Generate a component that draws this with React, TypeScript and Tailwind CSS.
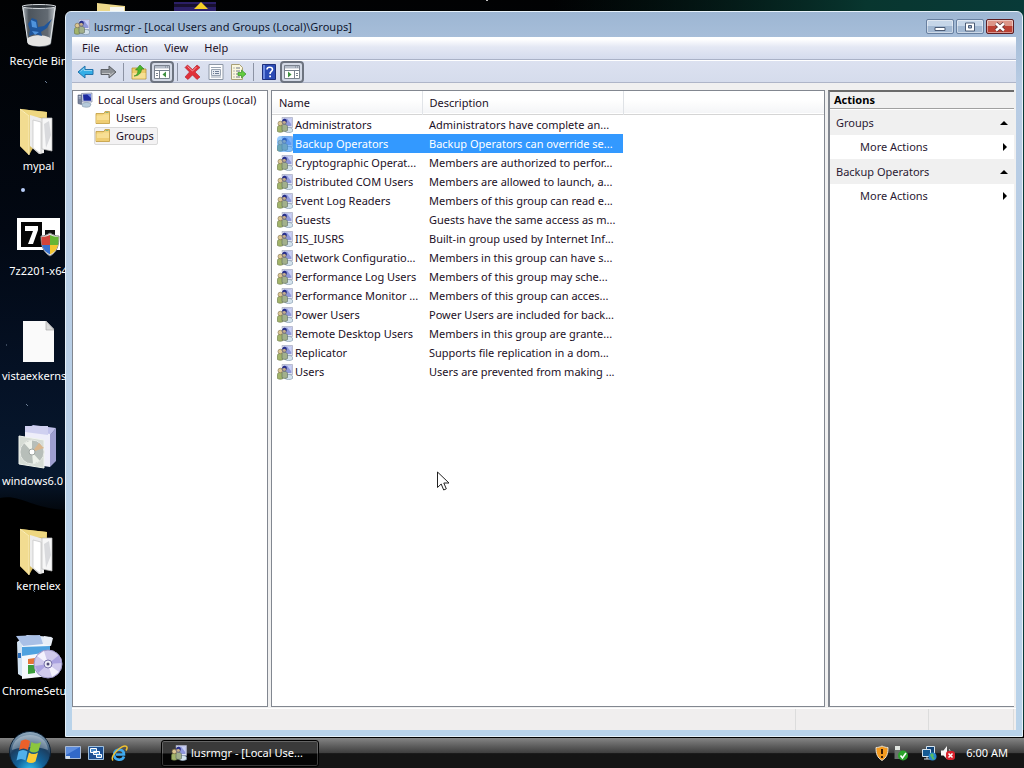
import clsx from 'clsx'
import type { ReactNode } from 'react'

const groups = [
	{ name: 'Administrators', description: 'Administrators have complete an...' },
	{ name: 'Backup Operators', description: 'Backup Operators can override se...' },
	{ name: 'Cryptographic Operat...', description: 'Members are authorized to perfor...' },
	{ name: 'Distributed COM Users', description: 'Members are allowed to launch, a...' },
	{ name: 'Event Log Readers', description: 'Members of this group can read e...' },
	{ name: 'Guests', description: 'Guests have the same access as m...' },
	{ name: 'IIS_IUSRS', description: 'Built-in group used by Internet Inf...' },
	{ name: 'Network Configuratio...', description: 'Members in this group can have s...' },
	{ name: 'Performance Log Users', description: 'Members of this group may sche...' },
	{ name: 'Performance Monitor ...', description: 'Members of this group can acces...' },
	{ name: 'Power Users', description: 'Power Users are included for back...' },
	{ name: 'Remote Desktop Users', description: 'Members in this group are grante...' },
	{ name: 'Replicator', description: 'Supports file replication in a dom...' },
	{ name: 'Users', description: 'Users are prevented from making ...' },
]

const UsersIcon = () => (
	<svg width="16" height="16" viewBox="0 0 16 16" className="shrink-0">
		<path d="M5 .500h10.500v10H6z" fill="#dfe2f0" stroke="#a4a8c0" strokeWidth=".7" />
		<path d="M6.500 1.500h8v7.500h-7z" fill="#8f98da" />
		<path d="M10 1.500h4.500v6z" fill="#c9d0f5" />
		<path d="M8 12c1-2 6.500-2 7.500 0v2.500c-2 1.500-5.500 1.500-7.500 0z" fill="#d3e2ec" stroke="#7b92a8" strokeWidth=".6" />
		<path d="M.5 10.500c0-3 5.500-3 5.500 0V14.500c-1.500 1-4 1-5.500 0z" fill="#a3b46a" stroke="#64753f" strokeWidth=".6" />
		<path d="M5 9.500c0-3 5-3 5.500 0v4c-1.500 1.200-4 1.200-5.500 0z" fill="#a2b08c" stroke="#5a6a62" strokeWidth=".6" />
		<circle cx="3.300" cy="6.500" r="2.300" fill="#dcc792" stroke="#7c6c46" strokeWidth=".6" />
		<circle cx="7.300" cy="5" r="2.200" fill="#c4ad8b" stroke="#4e4f78" strokeWidth=".6" />
		<path d="M5.300 4.500C5 1 9.500 1 9.800 4L9.200 5.500 8 3.700z" fill="#252d8a" />
	</svg>
)

const ComputerIcon = () => (
	<svg width="16" height="16" viewBox="0 0 16 16" className="shrink-0">
		<path d="M4.500 1.500 15 1v9H5z" fill="#cfd5e6" stroke="#8087a5" strokeWidth=".7" />
		<path d="M6 2.500 14 2v6.800H6.500z" fill="#1c2aa0" />
		<path d="M10 2.300 14 2v4z" fill="#7187e0" />
		<path d="M1 3h3.500v9.500L1 11.500z" fill="#78839b" stroke="#4e5a78" strokeWidth=".6" />
		<path d="M1.700 4.500h2M1.700 6h2" stroke="#d6deee" strokeWidth=".7" />
		<path d="M5 12c2-2 7-2 9 0l-1 2.500c-2 1-5 1-7.500 0z" fill="#b5cadb" stroke="#7f93a7" strokeWidth=".6" />
	</svg>
)

const FolderIcon = () => (
	<svg width="16" height="16" viewBox="0 0 16 16" className="shrink-0">
		<path d="M1 3.500h8l1-2h4.500v12H1z" fill="#f1d27a" stroke="#c09a3c" strokeWidth=".8" />
		<path d="M10.500 2.500h3" stroke="#8db37a" />
		<path d="M1.500 5.500h6l1-1h5.500V13H1.500z" fill="#f8df94" />
		<path d="M1.500 10h12.500v3H1.500z" fill="#efcd73" />
	</svg>
)

const Arrow = ({ className, fill, stroke }: { className?: string; fill: string; stroke: string }) => (
	<svg width="17" height="16" viewBox="0 0 17 16" className={className}>
		<path d="M1 8l7-6v3.500h8v5H8V14z" fill={fill} stroke={stroke} strokeLinejoin="round" />
		<path d="M3.500 7.500 7 4.500v2h8" fill="none" stroke="#fff" strokeOpacity=".45" />
	</svg>
)

const UpFolderIcon = () => (
	<svg width="16" height="16" viewBox="0 0 16 16">
		<path d="M1 4h5l1 1h8v10H1z" fill="#edcb68" stroke="#b48f37" strokeWidth=".8" />
		<path d="M1.500 9h13v5.500h-13z" fill="#f7df92" />
		<path d="M3 12c3-.5 4-3 4-6H4.500L9 1l4 4h-2.500c0 4-3 7-7.500 7z" fill="#4cb62c" stroke="#2f8420" strokeWidth=".6" />
	</svg>
)

const PaneIcon = ({ flipped }: { flipped?: boolean }) => (
	<svg width="16" height="14" viewBox="0 0 16 14">
		<path d="M.5.500h15v13H.5z" fill="#fff" stroke="#7a828e" />
		<path d="M1 1h14v2.500H1z" fill="#b5bdc9" />
		<path d="M11 2h1M13 2h1M1 5.500h14" stroke="#76808e" />
		<path d={flipped ? 'M10.500 6v7M12 8.500h2M12 10.500h2' : 'M5.500 6v7M2 8.500h2M2 10.500h2'} stroke="#7a828e" />
		<path d={flipped ? 'M4 6.500v6l3.500-3z' : 'M12 6.500v6l-3.500-3z'} fill="#3f9140" />
	</svg>
)

const DeleteIcon = () => (
	<svg width="17" height="16" viewBox="0 0 17 16">
		<path
			d="M3.500 1 8.500 5.500 13 1l3 2.500L11 8l5 5-3 2.500L8.500 11 4 15.500 1 13l4.500-5L1 3.500z"
			fill="#e0303a"
			stroke="#b01f2a"
			strokeWidth=".6"
		/>
		<path d="M3.500 2.500 8.500 7l4-4" fill="none" stroke="#f59aa0" />
	</svg>
)

const PropertiesIcon = () => (
	<svg width="16" height="16" viewBox="0 0 16 16">
		<path d="M1 .500h14v15H1z" fill="#fdfdfe" stroke="#8d97a6" />
		<path d="M3 3.500h10M3 13h10" stroke="#9aa4b2" />
		<path d="M3.500 5.500h9v6h-9z" fill="#e6eaf0" stroke="#9aa4b2" />
		<path d="M5 7.500h1M7 7.500h4M5 9.500h1M7 9.500h4" stroke="#6e7c94" />
	</svg>
)

const ExportIcon = () => (
	<svg width="17" height="16" viewBox="0 0 17 16">
		<path d="M1.500.500h8l3 3v12h-11z" fill="#fbf7dd" stroke="#a89f77" />
		<path d="M3.500 4h1M6 4h4M3.500 7h1M6 7h4M3.500 10h1M6 10h2M3.500 13h1M6 13h4" stroke="#6c7588" />
		<path d="M8 8.500h3.500V6l4.500 4-4.500 4v-2.500H8z" fill="#62cc3e" stroke="#36912a" strokeWidth=".7" />
	</svg>
)

const HelpIcon = () => (
	<svg width="14" height="16" viewBox="0 0 14 16">
		<path d="M.5.500h13v15H.5z" fill="#2b4bb5" stroke="#1d2f7d" />
		<path d="M1 1h2v14H1z" fill="#6d8be0" />
		<path d="M5 5.500C5 2.500 10.500 2.500 10.500 5.500c0 2-2.500 2-2.500 4.500" fill="none" stroke="#fff" strokeWidth="1.600" />
		<path d="M7.200 11.500H9v1.800H7.200z" fill="#fff" />
	</svg>
)

const BinIcon = () => (
	<svg width="48" height="48" viewBox="0 0 48 48">
		<defs>
			<linearGradient id="glass" x1="0" x2="1">
				<stop offset="0" stopColor="#b9c0c6" />
				<stop offset=".2" stopColor="#4c545c" />
				<stop offset=".75" stopColor="#626a72" />
				<stop offset="1" stopColor="#c3c9cd" />
			</linearGradient>
		</defs>
		<path d="M7 3h34l-5 38c-4 4-18 4-23 0z" fill="url(#glass)" />
		<path d="M12 36c4-5 20-5 24 0l-1 5c-5 3-17 3-22 0z" fill="#e4e4e2" />
		<path d="m13 21 4-6 5 2 1 7 6-1 8-7-5 9-6 4 1 4-7-2-6 2 1-6z" fill="#1f559a" />
		<path d="m16 17 5 2 1 6-5-1zM17 28l7 1-4 3z" fill="#4f93dc" />
		<path d="M8 5l5 35M40 5l-5 35" stroke="#e2e6e9" />
		<ellipse cx="24" cy="3.500" rx="17" ry="2" fill="#30363c" stroke="#d6dade" />
	</svg>
)

const DocsFolderIcon = () => (
	<svg width="48" height="48" viewBox="0 0 48 48">
		<path d="M5 1l27 3v12L14 47 5 38z" fill="#d7bb5e" />
		<path d="M5 1l9 7v39l-9-9z" fill="#f2dc91" />
		<path d="M5 1l27 3-1 6-17-2z" fill="#eed780" />
		<path d="M15 7l14 4v34l-5 1-9-8z" fill="#ededed" />
		<path d="M18 12l8 2v32l-8-6z" fill="#fff" stroke="#c2c2c2" strokeWidth=".7" />
		<path d="M27 10h10v33l-10-2z" fill="#f7f7f7" stroke="#bcbcbc" strokeWidth=".7" />
		<path d="M29 16l5-3 2 14-5 13z" fill="#d9dadd" />
		<path d="M5 1l9 7v39" fill="none" stroke="#faedb8" />
	</svg>
)

const SevenZipIcon = () => (
	<svg width="48" height="48" viewBox="0 0 48 48">
		<path d="M2 5h43v32H2z" fill="#fff" />
		<path d="M6 9h21v25H6z" fill="#050505" />
		<path d="M10 13h13v4l-5 14h-5l5-13h-8z" fill="#fff" />
		<path d="M30 17h10v5H30z" fill="#111" />
		<path d="M35 20c3 2 6 3 9 3 0 10-2 16-9 20-7-4-9-10-9-20 3 0 6-1 9-3z" fill="#e8e8e8" stroke="#8a8a8a" />
		<path d="M35 22v10h-8c-.5-2-.5-5-.5-8 3 0 6-1 8.500-2z" fill="#d2443a" />
		<path d="M35 22c2.500 1 5.500 2 8.500 2 0 3 0 6-.5 8h-8z" fill="#65b535" />
		<path d="M27 32h8v9.500c-4-2-7-5-8-9.500z" fill="#3871cd" />
		<path d="M35 32h8c-1 4.500-4 7.500-8 9.500z" fill="#f3c52f" />
	</svg>
)

const PageIcon = () => (
	<svg width="48" height="48" viewBox="0 0 48 48">
		<path d="M8 3h23l8 8v33H8z" fill="#fafafa" />
		<path d="M31 3l8 9h-8z" fill="#dcdcdc" stroke="#a9a9a9" strokeWidth=".7" />
	</svg>
)

const InstallerIcon = () => (
	<svg width="48" height="48" viewBox="0 0 48 48">
		<path d="M10 7l8-5 23 3-7 9z" fill="#bfc0ea" />
		<path d="M10 7l25 4v33l-25-4z" fill="#eeeefa" />
		<path d="M35 12l6-7v33l-6 6z" fill="#9d9ed0" />
		<path d="M10 3h23v9l-23-3z" fill="#cfd0f0" />
		<path d="M4 13l25 4v28L4 41z" fill="#d6dcd5" stroke="#f1f5ef" />
		<circle cx="17" cy="29" r="12" fill="#b7beb9" stroke="#e6e9e5" />
		<path d="M17 29 9 20l8-3zM17 29l8 9-7 3z" fill="#edf1ea" />
		<path d="M17 29l7-9 5 5z" fill="#d9b58c" />
		<circle cx="17" cy="29" r="3" fill="#fff" stroke="#9ea5a0" />
	</svg>
)

const SetupIcon = () => (
	<svg width="48" height="48" viewBox="0 0 48 48">
		<path d="M2 9l10-7 25 2-6 9z" fill="#dfe9f7" />
		<path d="M2 9h6v35l-5-3z" fill="#d3e3f2" />
		<path d="M7 11l28-1v33L7 46z" fill="#f4f8fc" />
		<path d="M7 14l28-1v6L7 23z" fill="#4fa2df" />
		<path d="M1 3l24-1 3 9-20 2z" fill="#a9c0e6" />
		<path d="M28 11l1-8 9 2-2 8z" fill="#e9eef6" />
		<path d="M13 26l7-1v6h-7z" fill="#e57638" />
		<path d="M13 32h7v8l-7 1z" fill="#3b9d3c" />
		<path d="M3 20h3v5H3z" fill="#2a6cba" />
		<circle cx="33" cy="31" r="14" fill="#cfc9ec" stroke="#9d97c8" />
		<path d="M33 31 22 23l7-5zM33 31l11 8-7 5z" fill="#f4f2fd" />
		<path d="M33 31 44 22l2 8zM33 31l-10 9-3-7z" fill="#aaa2e0" />
		<circle cx="33" cy="31" r="4" fill="#ececf6" stroke="#7771a9" />
		<circle cx="33" cy="31" r="1.500" fill="#4d4875" />
	</svg>
)

const StartOrb = () => (
	<svg width="44" height="44" viewBox="0 0 44 44">
		<defs>
			<radialGradient id="orb" cx=".5" cy=".95" r=".95">
				<stop offset="0" stopColor="#35c4f3" />
				<stop offset=".35" stopColor="#12639b" />
				<stop offset=".65" stopColor="#1b3f62" />
				<stop offset="1" stopColor="#9bb3c6" />
			</radialGradient>
		</defs>
		<circle cx="22" cy="22" r="20.500" fill="url(#orb)" stroke="#0d2237" />
		<path d="M4 20C5 0 39 0 40 20c-10-4-26-4-36 0z" fill="#fff" opacity=".3" />
		<path d="M13 11c3-2 6-2 9 0l-2 9c-3-2-6-2-9 0z" fill="#e9602b" />
		<path d="M23.500 12c3 2 6 2 9.500 0l-2.500 9c-3 2-6 2-9 0z" fill="#8cc63c" />
		<path d="M10.500 21.500c3-2 6-2 9 0l-2 9c-3-2-6-2-9 0z" fill="#50b0ea" />
		<path d="M21 22.500c3 2 6 2 9 0l-2.500 9c-3 2-6 2-9 0z" fill="#fbcb35" />
	</svg>
)

const desktopIcons = [
	{ label: 'Recycle Bin', icon: <BinIcon /> },
	{ label: 'mypal', icon: <DocsFolderIcon /> },
	{ label: '7z2201-x64', icon: <SevenZipIcon /> },
	{ label: 'vistaexkerns', icon: <PageIcon />, long: true },
	{ label: 'windows6.0', icon: <InstallerIcon />, long: true },
	{ label: 'kernelex', icon: <DocsFolderIcon /> },
	{ label: 'ChromeSetup', icon: <SetupIcon />, long: true },
]

const Wallpaper = () => (
	<svg className="absolute inset-0 h-full w-full" viewBox="0 0 1024 768" preserveAspectRatio="none">
		<defs>
			<linearGradient id="sky" x1="0" x2="0" y1="0" y2="1">
				<stop offset="0" stopColor="#010203" />
				<stop offset=".3" stopColor="#020813" />
				<stop offset=".5" stopColor="#051226" />
				<stop offset=".62" stopColor="#07182e" />
				<stop offset=".67" stopColor="#020509" />
				<stop offset=".7" stopColor="#000" />
			</linearGradient>
			<linearGradient id="aurora" x1="0" x2="1">
				<stop offset=".1" stopColor="#04221d" stopOpacity="0" />
				<stop offset=".7" stopColor="#08362f" />
				<stop offset="1" stopColor="#083a38" />
			</linearGradient>
		</defs>
		<path d="M0 0h1024v768H0z" fill="url(#sky)" />
		<path d="M500 0h524v730H500z" fill="url(#aurora)" />
		<path d="M0 498c20-4 30 10 66 12v258H0z" fill="#000" />
		<circle cx="23" cy="190" r="2" fill="#b7cdf8" />
		<circle cx="487" cy="0" r="1" fill="#fff" />
		<path d="M45 81l2 2M26 404l2 2M33 590l2 2M6 345h1" stroke="#6d7f96" />
		<path d="M97 3l28 3v10H97z" fill="#ecd88b" />
		<path d="M110 7h14v6h-14z" fill="#f7f7ef" />
		<path d="M174 2h42v12h-42z" fill="#2b1f66" />
		<path d="M174 4h42v3h-42z" fill="#17102f" />
		<path d="M194 9l7-7 7 7z" fill="#f4cf27" />
	</svg>
)

const CaptionButton = ({ label, danger, children }: { label: string; danger?: boolean; children: ReactNode }) => (
	<button
		aria-label={label}
		className={clsx(
			'flex h-[15px] w-7 items-center justify-center rounded-[2px] border shadow-[inset_0_0_0_1px_rgba(255,255,255,0.45)]',
			danger
				? 'border-[#5c1e22] bg-linear-to-b from-[#dc9587] from-45% to-[#bb4133] to-50%'
				: 'border-[#6880a0] bg-linear-to-b from-[#c6d6e8] from-45% to-[#a2b8d2] to-50%',
		)}
	>
		{children}
	</button>
)

const ToolButton = ({ label, pressed, children }: { label: string; pressed?: boolean; children: ReactNode }) => (
	<button
		aria-label={label}
		aria-pressed={pressed}
		className={clsx(
			'flex h-[22px] items-center justify-center',
			pressed
				? 'w-6 rounded-[4px] border-2 border-[#6d7480] bg-[#d3d9e5]'
				: 'w-[23px]',
		)}
	>
		{children}
	</button>
)

const ToolSeparator = () => <div className="mx-[3px] h-[18px] w-px bg-[#8c93a4]" />

const TitleBar = () => (
	<header className="flex h-[25px] items-center justify-between pr-0.5 pl-0.5">
		<h1 className="flex items-center gap-1 pt-1 text-[#101830]">
			<UsersIcon />
			lusrmgr - [Local Users and Groups (Local)\Groups]
		</h1>
		<div className="flex gap-0.5 pt-1">
			<CaptionButton label="Minimize">
				<svg width="12" height="10" viewBox="0 0 12 10">
					<path d="M1 5.500h10v3H1z" fill="#fff" stroke="#4d5d76" />
				</svg>
			</CaptionButton>
			<CaptionButton label="Restore">
				<svg width="12" height="10" viewBox="0 0 12 10">
					<path d="M1.500 1h9v8h-9z" fill="#fff" stroke="#4d5d76" />
					<path d="M4.500 3.500h3v2.500h-3z" fill="#9db2cc" stroke="#4d5d76" />
				</svg>
			</CaptionButton>
			<CaptionButton label="Close" danger>
				<svg width="12" height="10" viewBox="0 0 12 10">
					<path d="M2 1.500l8 7M10 1.500l-8 7" stroke="#5f3436" strokeWidth="4" />
					<path d="M2 1.500l8 7M10 1.500l-8 7" stroke="#fff" strokeWidth="2.400" />
				</svg>
			</CaptionButton>
		</div>
	</header>
)

const MenuBar = () => (
	<nav className="flex h-[23px] items-center border-b border-[#a9b1c6] bg-linear-to-b from-white from-10% via-[#e4e8f4] via-45% to-[#d4dbed] pl-0.5 text-[#1c1026]">
		<button className="h-5 px-2">File</button>
		<button className="h-5 px-2">Action</button>
		<button className="h-5 px-2">View</button>
		<button className="h-5 px-2">Help</button>
	</nav>
)

const ToolBar = () => (
	<div className="flex h-[23px] items-center border-t border-b border-t-white border-b-[#aeb5c8] bg-linear-to-b from-[#dce1f0] to-[#d5dcec] pl-0.5">
		<ToolButton label="Back">
			<Arrow fill="#35aee6" stroke="#2272ac" />
		</ToolButton>
		<ToolButton label="Forward">
			<Arrow className="rotate-180" fill="#8d9196" stroke="#5c6066" />
		</ToolButton>
		<ToolSeparator />
		<ToolButton label="Up one level">
			<UpFolderIcon />
		</ToolButton>
		<ToolButton label="Show or hide console tree" pressed>
			<PaneIcon />
		</ToolButton>
		<ToolSeparator />
		<ToolButton label="Delete">
			<DeleteIcon />
		</ToolButton>
		<ToolButton label="Properties">
			<PropertiesIcon />
		</ToolButton>
		<ToolButton label="Export list">
			<ExportIcon />
		</ToolButton>
		<ToolSeparator />
		<ToolButton label="Help">
			<HelpIcon />
		</ToolButton>
		<ToolButton label="Show or hide action pane" pressed>
			<PaneIcon flipped />
		</ToolButton>
	</div>
)

const TreePane = () => (
	<aside className="w-[196px] shrink-0 border border-[#828790] bg-white pl-1 text-[#1c1026]">
		<button className="flex h-[18px] items-center gap-[5px] whitespace-nowrap">
			<ComputerIcon />
			Local Users and Groups (Local)
		</button>
		<ul className="pl-[17px]">
			<li>
				<button className="flex h-[18px] items-center gap-[5px] border border-transparent pr-[3px]">
					<FolderIcon />
					Users
				</button>
			</li>
			<li>
				<button className="flex h-[18px] items-center gap-[5px] rounded-[2px] border border-[#d9d9d9] bg-[#f3f2f3] pr-[3px]">
					<FolderIcon />
					Groups
				</button>
			</li>
		</ul>
	</aside>
)

const GroupList = () => (
	<main className="min-w-0 flex-1 border border-[#828790] bg-white">
		<table className="w-full table-fixed border-collapse text-left whitespace-nowrap text-[#1c1026]">
			<colgroup>
				<col className="w-[150px]" />
				<col className="w-[201px]" />
				<col />
			</colgroup>
			<thead>
				<tr className="h-[23px] border-b border-[#d5d5d5] bg-linear-to-b from-white from-40% to-[#f4f5f7]">
					<th className="border-r border-[#e1e4e8] pt-px pl-[7px] font-normal">Name</th>
					<th className="border-r border-[#dfe2e6] pt-px pl-[7px] font-normal">Description</th>
					<th />
				</tr>
				<tr className="h-px" />
			</thead>
			<tbody>
				{groups.map((group, i) => (
					<tr key={group.name} className={clsx('h-[19px]', i === 1 && 'text-white')} aria-selected={i === 1}>
						<td className="p-0">
							<div className="flex h-[19px] items-center pl-[5px]">
								<span className={clsx(i === 1 && 'relative')}>
									<UsersIcon />
									{i === 1 && <span className="absolute inset-0 rounded-sm bg-[#3399ff]/50" />}
								</span>
								<span className={clsx('flex h-[19px] flex-1 items-center pl-0.5', i === 1 && 'bg-[#3399ff]')}>
									{group.name}
								</span>
							</div>
						</td>
						<td className={clsx('p-0 pl-[7px]', i === 1 && 'bg-[#3399ff]')}>{group.description}</td>
						<td />
					</tr>
				))}
			</tbody>
		</table>
	</main>
)

const ActionSection = ({ title }: { title: string }) => (
	<section>
		<button className="flex h-[25px] w-full items-center justify-between bg-[#f0f0f0] pr-[6px] pl-[6px]">
			{title}
			<svg width="8" height="4" viewBox="0 0 8 4" className="text-black">
				<path d="M4 0l4 4H0z" fill="currentColor" />
			</svg>
		</button>
		<button className="flex h-6 w-full items-center justify-between pr-[7px] pl-[30px]">
			More Actions
			<svg width="4" height="8" viewBox="0 0 4 8" className="text-black">
				<path d="M0 0l4 4-4 4z" fill="currentColor" />
			</svg>
		</button>
	</section>
)

const ActionsPane = () => (
	<aside className="w-[186px] shrink-0 border-t-2 border-b border-l-2 border-[#828790] border-t-[#6b6b6b] bg-white text-[#2b1a33]">
		<h2 className="mb-px flex h-[17px] items-center border-b border-[#a0a0a0] bg-[#f0f0f0] pl-1 font-bold text-black">
			Actions
		</h2>
		<ActionSection title="Groups" />
		<ActionSection title="Backup Operators" />
	</aside>
)

const StatusBar = () => (
	<footer className="flex h-[22px] border-t border-white bg-[#f0eeee] pr-0.5">
		<div className="flex-1 border-r border-[#dcdcdc]" />
		<div className="w-[133px] border-r border-[#dcdcdc]" />
		<div className="w-[85px] border-r border-[#dcdcdc]" />
	</footer>
)

const ConsoleWindow = () => (
	<div className="relative flex min-w-0 flex-1 flex-col rounded-t-[6px] border border-[#e6f1fa] bg-linear-to-b from-[#9db6d3] via-[#b8cce4] via-10% to-[#b9d3ea] px-[6px] pb-[6px]">
		<TitleBar />
		<div className="flex flex-1 flex-col bg-[#f0f0f0]">
			<MenuBar />
			<ToolBar />
			<div className="flex flex-1 gap-[3px] pt-[7px] pr-0.5 pb-px">
				<TreePane />
				<GroupList />
				<ActionsPane />
			</div>
			<StatusBar />
		</div>
	</div>
)

const Taskbar = () => (
	<footer className="relative flex h-[30px] items-center bg-linear-to-b from-[#858585] via-[#3e3e3e] via-50% to-[#151515] to-52% text-white">
		<button aria-label="Start" className="absolute -top-2 left-2">
			<StartOrb />
		</button>
		<div className="flex w-[161px] items-center gap-[7px] pl-[65px]">
			<button aria-label="Show desktop">
				<svg width="16" height="14" viewBox="0 0 16 14">
					<path d="M.5.500h15v12H.5z" fill="#3269c8" stroke="#a9bad4" />
					<path d="M1 1h14L1 9z" fill="#7aa5ec" opacity=".6" />
					<path d="M1 10h4v3H1z" fill="#d0dbe8" />
				</svg>
			</button>
			<button aria-label="Switch between windows">
				<svg width="16" height="14" viewBox="0 0 16 14">
					<path d="M.5.500h15v13H.5z" fill="#1d4f91" stroke="#9fc0de" />
					<path d="M2.500 2.500h6v4h-6zM5.500 5.500h6v3h-6zM8.500 8.500h5v3h-5z" fill="#4a8ac8" stroke="#fff" />
				</svg>
			</button>
			<button aria-label="Internet Explorer">
				<svg width="17" height="17" viewBox="0 0 17 17">
					<path d="M13 11.500C11.500 16 3 16 3.200 9.500 3.300 3 13 3 13 9.500H5" fill="none" stroke="#3fa9ee" strokeWidth="2.600" />
					<path d="M2 15.500C-1.500 11 12-2 15.500 1.500c1 1 .5 2.500-.5 4" fill="none" stroke="#f1c22e" strokeWidth="1.500" />
				</svg>
			</button>
		</div>
		<button className="flex h-[27px] w-[158px] items-center gap-1 rounded-[3px] border border-black bg-linear-to-b from-[#3a3a3a] from-48% to-[#050505] to-52% pl-[9px] shadow-[inset_0_0_0_1px_rgba(255,255,255,0.22)]">
			<UsersIcon />
			lusrmgr - [Local Use...
		</button>
		<div className="ml-auto flex items-center pr-4">
			<svg width="14" height="16" viewBox="0 0 14 16">
				<path d="M7 1c2 1 4 1.500 6 1.500 0 6-1 10-6 13-5-3-6-7-6-13C3 2.500 5 2 7 1z" fill="#f39a1e" stroke="#e7dfd0" />
				<path d="M7 4v5M7 11v2" stroke="#3c1d05" strokeWidth="2" />
			</svg>
			<svg width="16" height="16" viewBox="0 0 16 16" className="ml-1">
				<path d="M2 1h5v4H2z" fill="#dfe4df" />
				<path d="M1.500 5h6v9h-6z" fill="#696f6c" />
				<circle cx="10" cy="10.500" r="5" fill="#2ca32c" />
				<path d="M7.500 10.500l2 2.500 3.500-5" fill="none" stroke="#fff" strokeWidth="1.600" />
			</svg>
			<svg width="16" height="16" viewBox="0 0 16 16" className="ml-3">
				<path d="M5.500 1.500h8v7h-8z" fill="#104378" stroke="#d5e4ef" />
				<path d="M1.500 4.500h8v7h-8z" fill="#165b94" stroke="#d5e4ef" />
				<path d="M3 14h6M6 12v2" stroke="#d5e4ef" />
				<circle cx="11.500" cy="11.500" r="4" fill="#2787cf" />
				<path d="M9 10l2-2 2 2-1 2 2 1-2 2z" fill="#57bc62" />
			</svg>
			<svg width="16" height="16" viewBox="0 0 16 16" className="ml-[3px]">
				<path d="M1 5.500h2.500L7 1v13L3.500 10.500H1z" fill="#f4f4f4" />
				<path d="M9 4c1 1 1 2 1 3" fill="none" stroke="#d0d0d0" />
				<rect x="6" y="6" width="9" height="9" rx="3" fill="#d8222c" />
				<path d="M8.500 8.500l4 4M12.500 8.500l-4 4" stroke="#fff" strokeWidth="1.500" />
			</svg>
			<time className="ml-2.5">6:00 AM</time>
		</div>
	</footer>
)

export default function App() {
	return (
		<div className="relative flex h-screen min-h-[480px] flex-col overflow-hidden bg-black font-['Noto_Sans','Open_Sans',sans-serif] text-[11px] leading-4 text-black">
			<Wallpaper />
			<div className="relative flex min-h-0 flex-1 pt-[11px] pr-px pb-px">
				<div className="-mt-[11px] w-[65px] shrink-0">
					{desktopIcons.map(({ label, icon, long }) => (
						<button key={label} className="flex h-[105px] w-[77px] flex-col items-center gap-0.5 pt-[3px] text-white">
							{icon}
							<span className={clsx('whitespace-nowrap', long && 'self-start pl-0.5')}>{label}</span>
						</button>
					))}
				</div>
				<ConsoleWindow />
			</div>
			<Taskbar />
			<svg width="14" height="22" viewBox="0 0 14 22" className="absolute top-[471px] left-[436px]">
				<path d="M1.500 1v15.500l3.700-3.500 2.500 6 2.600-1.200L7.800 12H13z" fill="#fff" stroke="#222" />
			</svg>
		</div>
	)
}
